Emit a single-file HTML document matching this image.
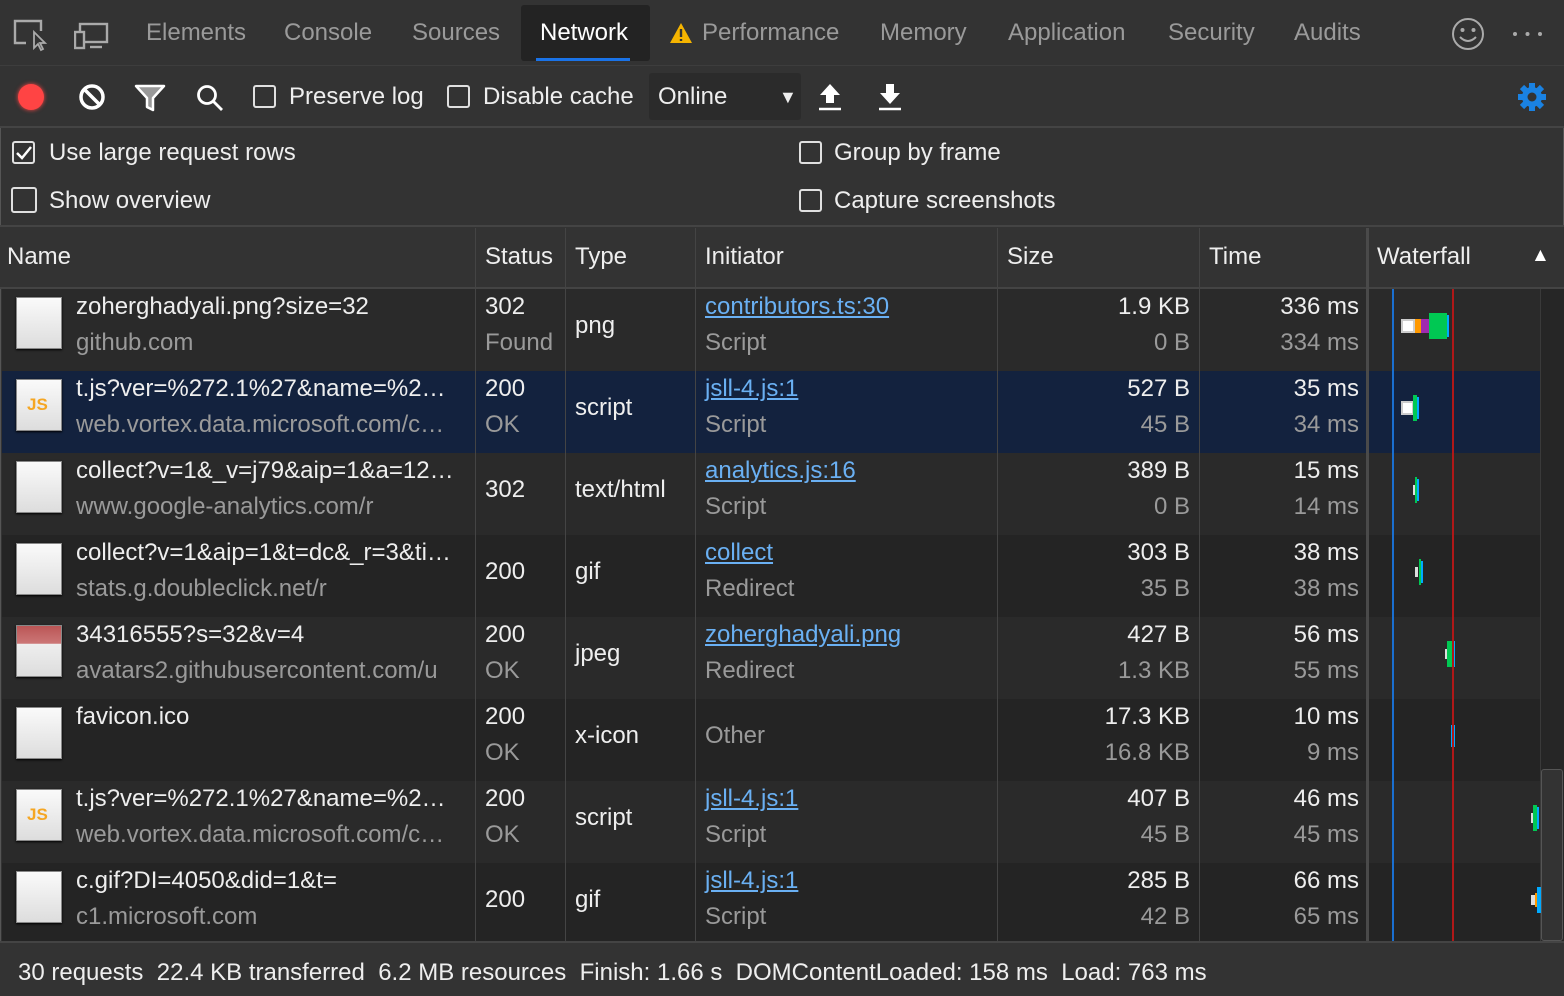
<!DOCTYPE html>
<html><head><meta charset="utf-8"><style>
*{box-sizing:border-box;margin:0;padding:0}
body{width:1564px;height:996px;background:#333;font-family:"Liberation Sans",Arial,sans-serif;color:#e8e8e8;position:relative;overflow:hidden;outline:1px solid #555;outline-offset:-1px}
.a{position:absolute;white-space:nowrap}
.tab{font-size:24px;color:#9a9a9a;top:19px}
.cb{position:absolute;width:23px;height:23px;border:2px solid #e0e0e0;border-radius:3px}
.t{font-size:24px;color:#eee}
.g{color:#9a9a9a}
.lnk{color:#6ab0f3;text-decoration:underline}
.nm{width:385px;overflow:hidden;text-overflow:ellipsis}
.row{position:absolute;left:2px;width:1538px;height:82px}
.vl{position:absolute;top:228px;height:717px;width:1px;background:#444}
.ic{position:absolute;left:16px;width:46px;height:52px;background:linear-gradient(#fafafa,#ddd);border:1px solid #888;box-shadow:0 1px 2px #000}
.r{text-align:right}
</style></head><body>
<div class="a" style="left:0;top:0;width:1564px;height:66px;background:#333;border-bottom:1px solid #3d3d3d"></div>
<svg class="a" style="left:12px;top:18px" width="36" height="34" viewBox="0 0 36 34"><path d="M14 25H3V3h26v10" fill="none" stroke="#aaa" stroke-width="2.4"/><path d="M22 14v16l4-4 3 6 2-1-3-6h5z" fill="none" stroke="#aaa" stroke-width="1.8"/></svg>
<svg class="a" style="left:74px;top:22px" width="36" height="30" viewBox="0 0 36 30"><rect x="6" y="2" width="27" height="18" fill="none" stroke="#aaa" stroke-width="2.4"/><rect x="1" y="10" width="9" height="16" fill="#333" stroke="#aaa" stroke-width="2.4"/><path d="M16 25h12" stroke="#aaa" stroke-width="2.4"/></svg>
<div class="a tab" style="left:146px">Elements</div>
<div class="a tab" style="left:284px">Console</div>
<div class="a tab" style="left:412px">Sources</div>
<div class="a" style="left:521px;top:5px;width:129px;height:56px;background:#232323;border-radius:3px"></div>
<div class="a" style="left:536px;top:58px;width:94px;height:3px;background:#1a73e8"></div>
<div class="a tab" style="left:540px;color:#fff">Network</div>
<svg class="a" style="left:669px;top:22px" width="24" height="22" viewBox="0 0 24 22"><path d="M12 1L23 21H1z" fill="#f5b400"/><path d="M12 7v8M12 17v2" stroke="#333" stroke-width="2.4"/></svg>
<div class="a tab" style="left:702px">Performance</div>
<div class="a tab" style="left:880px">Memory</div>
<div class="a tab" style="left:1008px">Application</div>
<div class="a tab" style="left:1168px">Security</div>
<div class="a tab" style="left:1294px">Audits</div>
<svg class="a" style="left:1450px;top:17px" width="36" height="34" viewBox="0 0 36 34"><circle cx="18" cy="17" r="15" fill="none" stroke="#aaa" stroke-width="2"/><circle cx="12.5" cy="13" r="2" fill="#aaa"/><circle cx="23.5" cy="13" r="2" fill="#aaa"/><path d="M10 20q8 8 16 0" fill="none" stroke="#aaa" stroke-width="2"/></svg>
<svg class="a" style="left:1511px;top:29px" width="36" height="10"><circle cx="4" cy="5" r="2" fill="#aaa"/><circle cx="16.5" cy="5" r="2" fill="#aaa"/><circle cx="29" cy="5" r="2" fill="#aaa"/></svg>
<div class="a" style="left:0;top:66px;width:1564px;height:62px;background:#333;border-bottom:2px solid #444"></div>
<div class="a" style="left:18px;top:84px;width:26px;height:26px;border-radius:50%;background:#f44;box-shadow:0 0 4px #f44"></div>
<svg class="a" style="left:78px;top:83px" width="28" height="28" viewBox="0 0 28 28"><circle cx="14" cy="14" r="11" fill="none" stroke="#fff" stroke-width="3.5"/><path d="M7 7l14 14" stroke="#fff" stroke-width="3.5"/></svg>
<svg class="a" style="left:134px;top:84px" width="32" height="28" viewBox="0 0 32 28"><path d="M2 2h28L19 14v12l-6-3V14z" fill="#999" stroke="#fff" stroke-width="2.5" stroke-linejoin="round"/></svg>
<svg class="a" style="left:195px;top:83px" width="30" height="30" viewBox="0 0 30 30"><circle cx="12" cy="12" r="8.5" fill="none" stroke="#fff" stroke-width="2.8"/><path d="M18 18l9 9" stroke="#fff" stroke-width="2.8"/></svg>
<div class="cb" style="left:253px;top:85px"></div><div class="a t" style="left:289px;top:83px">Preserve log</div>
<div class="cb" style="left:447px;top:85px"></div><div class="a t" style="left:483px;top:83px">Disable cache</div>
<div class="a" style="left:649px;top:73px;width:152px;height:47px;background:#2b2b2b;border-radius:3px"></div>
<div class="a t" style="left:658px;top:83px">Online</div>
<div class="a" style="left:779px;top:87px;font-size:18px;color:#eee">▼</div>
<svg class="a" style="left:817px;top:82px" width="26" height="30" viewBox="0 0 26 30"><path d="M13 2L3 13h6v8h8v-8h6z" fill="#fff"/><path d="M2 27h22" stroke="#fff" stroke-width="2.5"/></svg>
<svg class="a" style="left:877px;top:82px" width="26" height="30" viewBox="0 0 26 30"><path d="M13 22L3 11h6V2h8v9h6z" fill="#fff"/><path d="M2 27h22" stroke="#fff" stroke-width="2.5"/></svg>
<svg class="a" style="left:1516px;top:81px" width="32" height="32" viewBox="0 0 32 32"><g fill="#1a82e2"><circle cx="16" cy="16" r="10"/><g stroke="#1a82e2" stroke-width="6"><path d="M16 2v28M2 16h28M6 6l20 20M26 6L6 26"/></g></g><circle cx="16" cy="16" r="4.5" fill="#333"/></svg>
<div class="cb" style="left:12px;top:141px"></div>
<svg class="a" style="left:15px;top:144px" width="18" height="18"><path d="M2 9l5 5L16 3" fill="none" stroke="#fff" stroke-width="2.5"/></svg>
<div class="a t" style="left:49px;top:139px">Use large request rows</div>
<div class="cb" style="left:11px;top:187px;width:26px;height:26px"></div>
<div class="a t" style="left:49px;top:187px">Show overview</div>
<div class="cb" style="left:799px;top:141px"></div><div class="a t" style="left:834px;top:139px">Group by frame</div>
<div class="cb" style="left:799px;top:189px"></div><div class="a t" style="left:834px;top:187px">Capture screenshots</div>
<div class="a" style="left:0;top:225px;width:1564px;height:2px;background:#444"></div>
<div class="a" style="left:0;top:227px;width:1564px;height:62px;background:#333;border-bottom:2px solid #444"></div>
<div class="a t" style="left:7px;top:243px">Name</div>
<div class="a t" style="left:485px;top:243px">Status</div>
<div class="a t" style="left:575px;top:243px">Type</div>
<div class="a t" style="left:705px;top:243px">Initiator</div>
<div class="a t" style="left:1007px;top:243px">Size</div>
<div class="a t" style="left:1209px;top:243px">Time</div>
<div class="a t" style="left:1377px;top:243px">Waterfall</div>
<div class="a" style="left:1531px;top:245px;font-size:19px;color:#fff">▲</div>
<div class="row" style="top:289px;background:#2a2a2a"></div>
<div class="row" style="top:371px;background:#13223e"></div>
<div class="row" style="top:453px;background:#2a2a2a"></div>
<div class="row" style="top:535px;background:#242424"></div>
<div class="row" style="top:617px;background:#2a2a2a"></div>
<div class="row" style="top:699px;background:#242424"></div>
<div class="row" style="top:781px;background:#2a2a2a"></div>
<div class="row" style="top:863px;background:#242424"></div>
<div class="vl" style="left:475px"></div><div class="vl" style="left:565px"></div><div class="vl" style="left:695px"></div><div class="vl" style="left:997px"></div><div class="vl" style="left:1199px"></div><div class="vl" style="left:1366px;width:3px;background:#4a4a4a"></div>
<div class="a" style="left:1540px;top:289px;width:24px;height:656px;background:#262626;border-left:1px solid #3a3a3a"></div>
<div class="a" style="left:1541px;top:769px;width:22px;height:172px;background:#333;border:1px solid #555;border-radius:3px"></div>
<div class="a" style="left:1392px;top:289px;width:2px;height:656px;background:#1a6fd0"></div>
<div class="a" style="left:1452px;top:289px;width:2px;height:656px;background:#b01818"></div>

<div class="ic" style="top:297px"></div>
<div class="a t nm" style="left:76px;top:293px">zoherghadyali.png?size=32</div><div class="a t g" style="left:76px;top:329px">github.com</div>
<div class="a t" style="left:485px;top:293px">302</div><div class="a t g" style="left:485px;top:329px">Found</div>
<div class="a t" style="left:575px;top:312px">png</div>
<div class="a t lnk" style="left:705px;top:293px">contributors.ts:30</div><div class="a t g" style="left:705px;top:329px">Script</div>
<div class="a t r" style="right:374px;top:293px">1.9 KB</div><div class="a t g r" style="right:374px;top:329px">0 B</div>
<div class="a t r" style="right:205px;top:293px">336 ms</div><div class="a t g r" style="right:205px;top:329px">334 ms</div>
<div class="a" style="left:1401px;top:319px;width:14px;height:14px;background:#fff;border:2px solid #ccc"></div><div class="a" style="left:1415px;top:319px;width:6px;height:14px;background:#f90"></div><div class="a" style="left:1421px;top:319px;width:8px;height:14px;background:#a02ab0"></div><div class="a" style="left:1429px;top:313px;width:18px;height:26px;background:#00c853"></div><div class="a" style="left:1447px;top:315px;width:2px;height:22px;background:#0af"></div>

<div class="ic" style="top:379px"></div><div class="a" style="left:27px;top:395px;font-size:17px;font-weight:bold;color:#f5a623">JS</div>
<div class="a t nm" style="left:76px;top:375px">t.js?ver=%272.1%27&amp;name=%2…</div><div class="a t g nm" style="left:76px;top:411px">web.vortex.data.microsoft.com/c…</div>
<div class="a t" style="left:485px;top:375px">200</div><div class="a t g" style="left:485px;top:411px">OK</div>
<div class="a t" style="left:575px;top:394px">script</div>
<div class="a t lnk" style="left:705px;top:375px">jsll-4.js:1</div><div class="a t g" style="left:705px;top:411px">Script</div>
<div class="a t r" style="right:374px;top:375px">527 B</div><div class="a t g r" style="right:374px;top:411px">45 B</div>
<div class="a t r" style="right:205px;top:375px">35 ms</div><div class="a t g r" style="right:205px;top:411px">34 ms</div>
<div class="a" style="left:1401px;top:401px;width:13px;height:14px;background:#fff;border:2px solid #ccc"></div><div class="a" style="left:1413px;top:395px;width:4px;height:26px;background:#00c853"></div><div class="a" style="left:1417px;top:397px;width:2px;height:22px;background:#0af"></div>

<div class="ic" style="top:461px"></div>
<div class="a t nm" style="left:76px;top:457px">collect?v=1&amp;_v=j79&amp;aip=1&amp;a=12…</div><div class="a t g" style="left:76px;top:493px">www.google-analytics.com/r</div>
<div class="a t" style="left:485px;top:476px">302</div>
<div class="a t" style="left:575px;top:476px">text/html</div>
<div class="a t lnk" style="left:705px;top:457px">analytics.js:16</div><div class="a t g" style="left:705px;top:493px">Script</div>
<div class="a t r" style="right:374px;top:457px">389 B</div><div class="a t g r" style="right:374px;top:493px">0 B</div>
<div class="a t r" style="right:205px;top:457px">15 ms</div><div class="a t g r" style="right:205px;top:493px">14 ms</div>
<div class="a" style="left:1413px;top:485px;width:2px;height:10px;background:#ddd"></div><div class="a" style="left:1415px;top:477px;width:2px;height:26px;background:#00c853"></div><div class="a" style="left:1417px;top:479px;width:2px;height:22px;background:#0af"></div>

<div class="ic" style="top:543px"></div>
<div class="a t nm" style="left:76px;top:539px">collect?v=1&amp;aip=1&amp;t=dc&amp;_r=3&amp;ti…</div><div class="a t g" style="left:76px;top:575px">stats.g.doubleclick.net/r</div>
<div class="a t" style="left:485px;top:558px">200</div>
<div class="a t" style="left:575px;top:558px">gif</div>
<div class="a t lnk" style="left:705px;top:539px">collect</div><div class="a t g" style="left:705px;top:575px">Redirect</div>
<div class="a t r" style="right:374px;top:539px">303 B</div><div class="a t g r" style="right:374px;top:575px">35 B</div>
<div class="a t r" style="right:205px;top:539px">38 ms</div><div class="a t g r" style="right:205px;top:575px">38 ms</div>
<div class="a" style="left:1415px;top:567px;width:3px;height:10px;background:#ddd"></div><div class="a" style="left:1419px;top:559px;width:2px;height:26px;background:#00c853"></div><div class="a" style="left:1421px;top:561px;width:2px;height:22px;background:#0af"></div>

<div class="ic" style="top:625px;background:linear-gradient(#b55 0,#c77 35%,#eee 36%,#ddd)"></div>
<div class="a t nm" style="left:76px;top:621px">34316555?s=32&amp;v=4</div><div class="a t g" style="left:76px;top:657px">avatars2.githubusercontent.com/u</div>
<div class="a t" style="left:485px;top:621px">200</div><div class="a t g" style="left:485px;top:657px">OK</div>
<div class="a t" style="left:575px;top:640px">jpeg</div>
<div class="a t lnk" style="left:705px;top:621px">zoherghadyali.png</div><div class="a t g" style="left:705px;top:657px">Redirect</div>
<div class="a t r" style="right:374px;top:621px">427 B</div><div class="a t g r" style="right:374px;top:657px">1.3 KB</div>
<div class="a t r" style="right:205px;top:621px">56 ms</div><div class="a t g r" style="right:205px;top:657px">55 ms</div>
<div class="a" style="left:1445px;top:649px;width:2px;height:10px;background:#ddd"></div><div class="a" style="left:1447px;top:641px;width:5px;height:26px;background:#00c853"></div><div class="a" style="left:1454px;top:641px;width:1px;height:26px;background:#0af"></div>

<div class="ic" style="top:707px"></div>
<div class="a t" style="left:76px;top:703px">favicon.ico</div>
<div class="a t" style="left:485px;top:703px">200</div><div class="a t g" style="left:485px;top:739px">OK</div>
<div class="a t" style="left:575px;top:722px">x-icon</div>
<div class="a t g" style="left:705px;top:722px">Other</div>
<div class="a t r" style="right:374px;top:703px">17.3 KB</div><div class="a t g r" style="right:374px;top:739px">16.8 KB</div>
<div class="a t r" style="right:205px;top:703px">10 ms</div><div class="a t g r" style="right:205px;top:739px">9 ms</div>
<div class="a" style="left:1451px;top:725px;width:1px;height:22px;background:#0af"></div><div class="a" style="left:1454px;top:725px;width:1px;height:22px;background:#0af"></div>

<div class="ic" style="top:789px"></div><div class="a" style="left:27px;top:805px;font-size:17px;font-weight:bold;color:#f5a623">JS</div>
<div class="a t nm" style="left:76px;top:785px">t.js?ver=%272.1%27&amp;name=%2…</div><div class="a t g nm" style="left:76px;top:821px">web.vortex.data.microsoft.com/c…</div>
<div class="a t" style="left:485px;top:785px">200</div><div class="a t g" style="left:485px;top:821px">OK</div>
<div class="a t" style="left:575px;top:804px">script</div>
<div class="a t lnk" style="left:705px;top:785px">jsll-4.js:1</div><div class="a t g" style="left:705px;top:821px">Script</div>
<div class="a t r" style="right:374px;top:785px">407 B</div><div class="a t g r" style="right:374px;top:821px">45 B</div>
<div class="a t r" style="right:205px;top:785px">46 ms</div><div class="a t g r" style="right:205px;top:821px">45 ms</div>
<div class="a" style="left:1531px;top:813px;width:2px;height:10px;background:#ddd"></div><div class="a" style="left:1533px;top:805px;width:4px;height:26px;background:#00c853"></div><div class="a" style="left:1537px;top:807px;width:2px;height:22px;background:#0af"></div>

<div class="ic" style="top:871px"></div>
<div class="a t nm" style="left:76px;top:867px">c.gif?DI=4050&amp;did=1&amp;t=</div><div class="a t g" style="left:76px;top:903px">c1.microsoft.com</div>
<div class="a t" style="left:485px;top:886px">200</div>
<div class="a t" style="left:575px;top:886px">gif</div>
<div class="a t lnk" style="left:705px;top:867px">jsll-4.js:1</div><div class="a t g" style="left:705px;top:903px">Script</div>
<div class="a t r" style="right:374px;top:867px">285 B</div><div class="a t g r" style="right:374px;top:903px">42 B</div>
<div class="a t r" style="right:205px;top:867px">66 ms</div><div class="a t g r" style="right:205px;top:903px">65 ms</div>
<div class="a" style="left:1531px;top:895px;width:4px;height:10px;background:#ddd"></div><div class="a" style="left:1535px;top:893px;width:2px;height:14px;background:#f90"></div><div class="a" style="left:1537px;top:887px;width:4px;height:26px;background:#0af"></div>
<div class="a" style="left:0;top:941px;width:1564px;height:55px;background:#333;border-top:2px solid #444"></div>
<div class="a t" style="left:18px;top:959px;word-spacing:0">30 requests&nbsp; 22.4 KB transferred&nbsp; 6.2 MB resources&nbsp; Finish: 1.66 s&nbsp; DOMContentLoaded: 158 ms&nbsp; Load: 763 ms</div>
</body></html>
